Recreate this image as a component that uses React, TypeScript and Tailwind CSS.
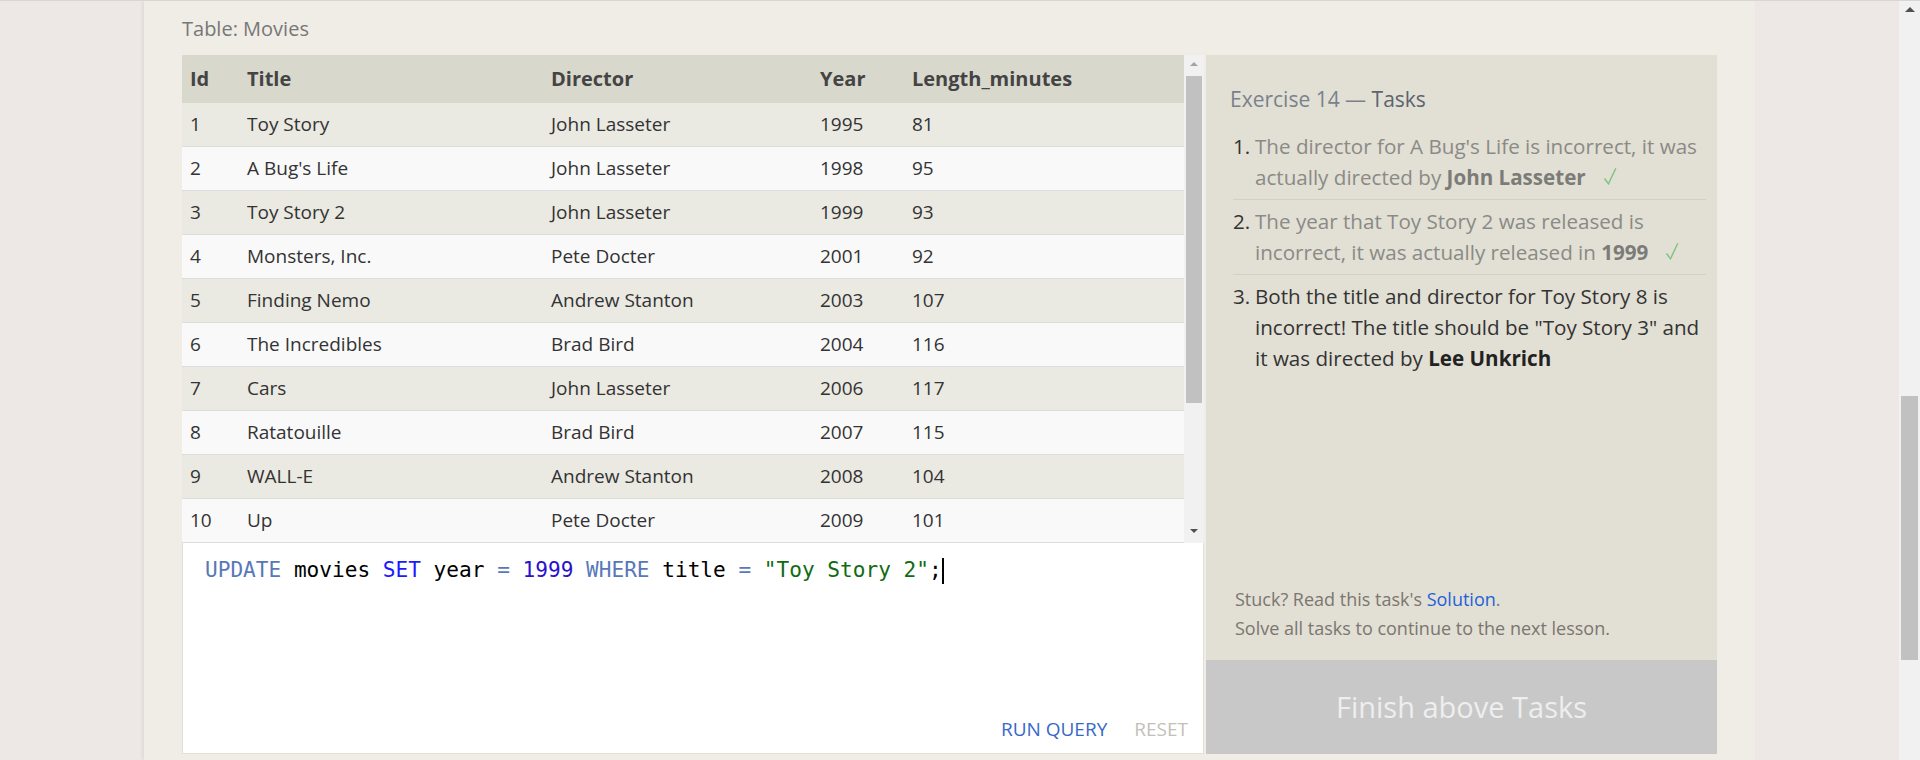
const movies = [
  { id: 1, title: "Toy Story", director: "John Lasseter", year: 1995, length: 81 },
  { id: 2, title: "A Bug's Life", director: "John Lasseter", year: 1998, length: 95 },
  { id: 3, title: "Toy Story 2", director: "John Lasseter", year: 1999, length: 93 },
  { id: 4, title: "Monsters, Inc.", director: "Pete Docter", year: 2001, length: 92 },
  { id: 5, title: "Finding Nemo", director: "Andrew Stanton", year: 2003, length: 107 },
  { id: 6, title: "The Incredibles", director: "Brad Bird", year: 2004, length: 116 },
  { id: 7, title: "Cars", director: "John Lasseter", year: 2006, length: 117 },
  { id: 8, title: "Ratatouille", director: "Brad Bird", year: 2007, length: 115 },
  { id: 9, title: "WALL-E", director: "Andrew Stanton", year: 2008, length: 104 },
  { id: 10, title: "Up", director: "Pete Docter", year: 2009, length: 101 },
];

function Check() {
  return (
    <svg width="14" height="18" viewBox="0 0 14 18" className="ml-[17px] inline-block align-baseline">
      <path d="M1.5 11.5 L5.5 16.8 L12.8 1.2" fill="none" stroke="#7cc47f" strokeWidth="1.4" />
    </svg>
  );
}

function TableScrollbar() {
  return (
    <div className="flex w-[20px] flex-col bg-[#f1f1f1]">
      <div className="flex h-[17px] items-center justify-center">
        <div className="h-0 w-0 border-x-[4px] border-b-[4px] border-x-transparent border-b-[#a3a3a3]"></div>
      </div>
      <div className="mx-[2px] mt-[4px] h-[327px] bg-[#c1c1c1]"></div>
      <div className="flex-1"></div>
      <div className="mb-[4px] flex h-[17px] items-center justify-center">
        <div className="h-0 w-0 border-x-[4px] border-t-[4px] border-x-transparent border-t-[#505050]"></div>
      </div>
    </div>
  );
}

export default function App() {
  return (
    <div className="flex h-[760px] w-[1920px] overflow-hidden border-t border-[#d6d6d6] bg-[#ede8e5] font-['Open_Sans',sans-serif]">
      <div className="flex-1">
        <div className="ml-[144px] h-full w-[1611px] bg-[#f0ede6] px-[38px] shadow-[-2px_0_3px_rgba(0,0,0,0.06)]">
          <div className="pt-[14px] pb-[12px] text-[20px] leading-[28px] text-[#777]">
            Table: Movies
          </div>

          <div className="flex gap-[2px]">
            {/* left side: table + editor */}
            <div className="flex w-[1022px] flex-col">
              <div className="flex h-[488px]">
                <div className="w-[1002px] text-[19px] text-[#333]">
                  <div className="grid h-[48px] grid-cols-[57px_304px_269px_92px_1fr] items-center bg-[#d9d8cc] text-[20px] font-bold text-[#444]">
                    <div className="px-2">Id</div>
                    <div className="px-2">Title</div>
                    <div className="px-2">Director</div>
                    <div className="px-2">Year</div>
                    <div className="px-2">Length_minutes</div>
                  </div>
                  {movies.map((m) => (
                    <div
                      key={m.id}
                      className={
                        "grid h-[44px] grid-cols-[57px_304px_269px_92px_1fr] items-center border-b border-[#dcdcdc] " +
                        (m.id % 2 === 1 ? "bg-[#eae9e2]" : "bg-[#f9f9f9]")
                      }>
                      <div className="px-2">{m.id}</div>
                      <div className="px-2">{m.title}</div>
                      <div className="px-2">{m.director}</div>
                      <div className="px-2">{m.year}</div>
                      <div className="px-2">{m.length}</div>
                    </div>
                  ))}
                </div>
                <TableScrollbar />
              </div>

              <div className="flex h-[211px] flex-col border-x border-b border-[#e2dfd8] bg-white">
                <div className="pt-[13px] pl-[22px] font-['DejaVu_Sans_Mono',monospace] text-[21.1px] leading-[28px] whitespace-pre text-black">
                  <span className="text-[#5878b8]">UPDATE</span> movies{" "}
                  <span className="text-[#1a1aff]">SET</span> year{" "}
                  <span className="text-[#5878b8]">=</span>{" "}
                  <span className="text-[#2a12cc]">1999</span>{" "}
                  <span className="text-[#5878b8]">WHERE</span> title{" "}
                  <span className="text-[#5878b8]">=</span>{" "}
                  <span className="text-[#116b11]">"Toy Story 2"</span>;
                  <span className="inline-block h-[26px] w-0 border-l-2 border-black align-middle"></span>
                </div>
                <div className="mt-auto flex justify-end gap-[27px] pr-[15px] pb-[11px] text-[19px] leading-[26px]">
                  <span className="text-[#3868c8]">RUN QUERY</span>
                  <span className="text-[#c3bfb8]">RESET</span>
                </div>
              </div>
            </div>

            {/* right side: tasks */}
            <div className="flex h-[699px] w-[511px] flex-col">
              <div className="flex flex-1 flex-col bg-[#e2dfd4]">
                <div className="pt-[30px] pl-[24px] text-[21px] leading-[28px]">
                  <span className="text-[#7a818c]">Exercise 14 — </span>
                  <span className="text-[#5c6470]">Tasks</span>
                </div>

                <ol className="mt-[12px] pr-[11px] pl-[27px] text-[20.6px] leading-[31px]">
                  <li className="flex border-b border-[#d3d0c5] py-[6px]">
                    <span className="w-[22px] shrink-0 text-[#333]">1.</span>
                    <span className="whitespace-nowrap text-[#8a8a86]">
                      The director for A Bug's Life is incorrect, it was
                      <br />
                      actually directed by <b className="text-[#7b7b78]">John Lasseter</b>
                      <Check />
                    </span>
                  </li>
                  <li className="flex border-b border-[#d3d0c5] py-[6px]">
                    <span className="w-[22px] shrink-0 text-[#333]">2.</span>
                    <span className="whitespace-nowrap text-[#8a8a86]">
                      The year that Toy Story 2 was released is
                      <br />
                      incorrect, it was actually released in <b className="text-[#7b7b78]">1999</b>
                      <Check />
                    </span>
                  </li>
                  <li className="flex py-[6px]">
                    <span className="w-[22px] shrink-0 text-[#333]">3.</span>
                    <span className="whitespace-nowrap text-[#333]">
                      Both the title and director for Toy Story 8 is
                      <br />
                      incorrect! The title should be "Toy Story 3" and
                      <br />
                      it was directed by <b className="text-[#222]">Lee Unkrich</b>
                    </span>
                  </li>
                </ol>

                <div className="mt-auto pb-[17px] pl-[29px] text-[18px] leading-[29px] text-[#7b7670]">
                  <p>
                    Stuck? Read this task's <span className="text-[#1f62d8]">Solution</span>.
                  </p>
                  <p>Solve all tasks to continue to the next lesson.</p>
                </div>
              </div>
              <div className="flex h-[94px] items-center justify-center bg-[#c8c8c8] text-[29px] text-[#eeeeee]">
                Finish above Tasks
              </div>
            </div>
          </div>
        </div>
      </div>

      {/* page scrollbar */}
      <div className="flex w-[21px] flex-col bg-[#f1f1f1]">
        <div className="flex h-[17px] items-center justify-center">
          <div className="h-0 w-0 border-x-[5px] border-b-[5px] border-x-transparent border-b-[#505050]"></div>
        </div>
        <div className="mx-[2px] mt-[378px] h-[264px] bg-[#c1c1c1]"></div>
      </div>
    </div>
  );
}
